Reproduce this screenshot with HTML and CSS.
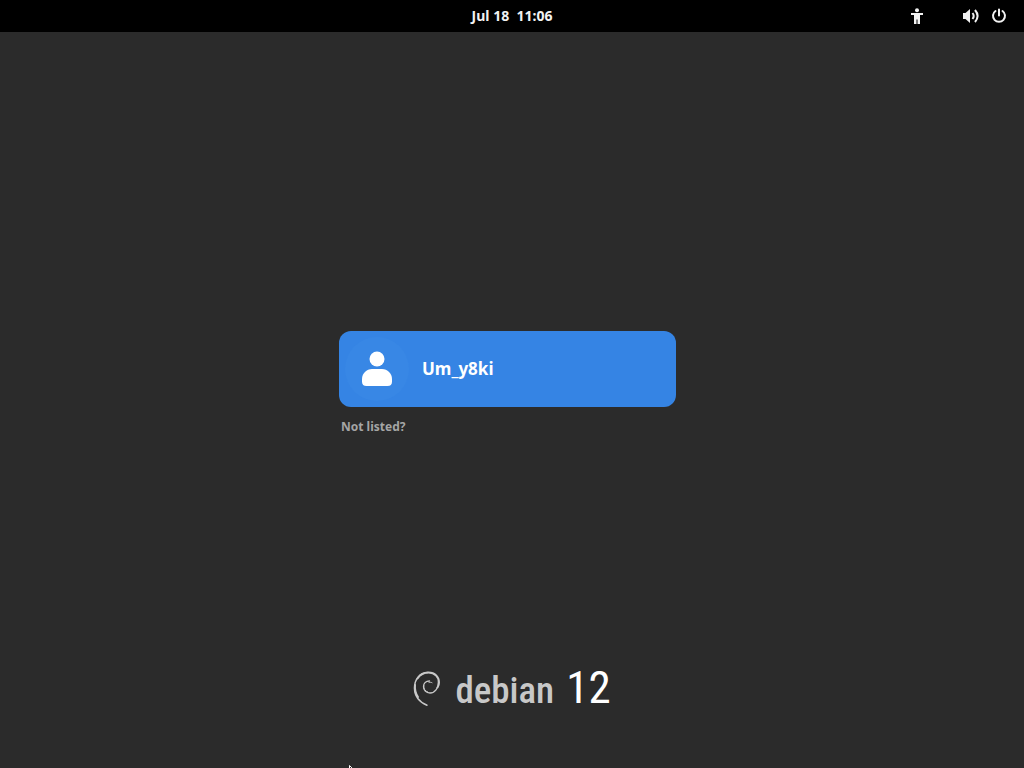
FILE: index.html
```
<!DOCTYPE html>
<html lang="en">
<head>
	<meta charset="UTF-8">
	<title>Login</title>
	<link rel="stylesheet" href="styles.css">
</head>
<body>
	<header class="panel">
		<button type="button" class="clock"><time>Jul 18&nbsp; 11:06</time></button>
		<div class="status">
			<button type="button" class="tray" aria-label="Accessibility">
				<svg width="16" height="16" viewBox="0 0 16 16" fill="currentColor">
					<circle cx="8" cy="2.200" r="2"/>
					<path d="M2 5h12v2h-3v9H8.500v-4.500h-1V16H5V7H2z"/>
				</svg>
			</button>
			<button type="button" class="tray" aria-label="System">
				<svg width="20" height="16" viewBox="0 0 20 16" fill="none" stroke="currentColor" stroke-width="2">
					<path d="M2 5h2.500L9 1v14L4.500 11H2z" fill="currentColor" stroke="none"/>
					<path d="M11.500 5q2.400 3 0 6"/>
					<path d="M14 2q5.200 6 0 12"/>
				</svg>
				<svg width="16" height="16" viewBox="0 0 16 16" fill="none" stroke="currentColor" stroke-width="2" stroke-linecap="round">
					<path d="M4.500 3a6 6 0 1 0 7 0M8 1.500v6"/>
				</svg>
			</button>
		</div>
	</header>

	<main class="login">
		<div class="users">
			<button type="button" class="user">
				<span class="avatar">
					<svg width="32" height="36" viewBox="0 0 32 36" fill="currentColor">
						<circle cx="16" cy="8" r="7.500"/>
						<path d="M11 18h10c5.500 0 10 4.500 10 10v2.500c0 3-1.500 4.500-4.500 4.500h-21C2.500 35 1 33.500 1 30.500V28c0-5.500 4.500-10 10-10z"/>
					</svg>
				</span>
				<span class="name">Um_y8ki</span>
			</button>
			<button type="button" class="other">Not listed?</button>
		</div>
	</main>

	<footer class="brand">
		<svg class="swirl" width="28" height="38" viewBox="0 0 28 38" fill="none" stroke="currentColor" stroke-linecap="round">
			<path d="M14 36.300C6.500 33 1.500 27 1.500 19 1.500 10 7 3.500 15 3.500" stroke-width="1.500"/>
			<path d="M4.500 9.500C7.500 5 11 3.500 15.500 3.500c6.500 0 10.500 4.500 10.500 10 0 2-.500 3.500-1.500 5" stroke-width="2"/>
			<path d="M25.500 12c.300 7-3.500 12-8.500 12-4 0-6.500-3-6.500-6.300 0-3.400 2.500-5.700 6-5.700" stroke-width="1.300"/>
			<path d="M10.700 16.500c-.5 3.500 1.800 5.800 4 6.500M16 13.500c1.200-.4 2-.3 3 .2" stroke-width="1"/>
			<path d="M2 16c-.400 4.500.400 8.500 3 12" stroke-width="2"/>
		</svg>
		<span class="distro">debian</span>
		<span class="release">12</span>
	</footer>

	<!-- mouse pointer, mostly below the screen edge -->
	<svg class="pointer" width="12" height="18" viewBox="0 0 12 18">
		<path d="M.5.500v15l3.500-3.500 2.500 5.500 2-1-2.500-5h5z" fill="#111" stroke="#fff"/>
	</svg>
</body>
</html>
```
FILE: styles.css
```
* {
	box-sizing: border-box;
	margin: 0;
	padding: 0;
}

body {
	display: flex;
	flex-direction: column;
	height: 100vh;
	overflow: hidden;
	position: relative;
	background: #2b2b2b;
	color: #fff;
	font-family: "Noto Sans", sans-serif;
	font-weight: bold;
}

button {
	border: 0;
	background: none;
	color: inherit;
	font: inherit;
	cursor: pointer;
}

svg {
	display: block;
}

.panel {
	display: grid;
	grid-template-columns: 1fr auto 1fr;
	align-items: center;
	height: 32px;
	background: #000;
	color: #f2f2f2;
}

.clock {
	grid-column: 2;
	font-size: 14px;
	line-height: 32px;
}

.status {
	display: flex;
	justify-content: flex-end;
	gap: 36px;
	padding-right: 17px;
}

.tray {
	display: flex;
	align-items: center;
	gap: 10px;
}

.login {
	flex: 1;
	display: flex;
	flex-direction: column;
	align-items: center;
	justify-content: center;
	padding-top: 74px;
}

.users {
	width: 100%;
	max-width: 346px;
	padding-right: 9px;
}

.user {
	display: flex;
	align-items: center;
	gap: 13px;
	width: 100%;
	padding: 6px;
	border-radius: 12px;
	background: #3584e4;
	text-align: left;
}

.avatar {
	display: flex;
	align-items: center;
	justify-content: center;
	width: 64px;
	height: 64px;
	border-radius: 50%;
	background: #3887e5;
}

.name {
	font-size: 17px;
	line-height: 24px;
}

.other {
	display: block;
	margin-top: 8px;
	padding: 0 2px;
	color: #a5a5a5;
	font-size: 12px;
	line-height: 24px;
}

.brand {
	display: flex;
	align-items: baseline;
	justify-content: center;
	height: 48px;
	margin-bottom: 56px;
	font-family: "Roboto Condensed", Roboto, sans-serif;
	font-weight: normal;
	line-height: 48px;
}

.swirl {
	align-self: center;
	margin-right: 14px;
	color: #c8c8c8;
}

.distro {
	margin-right: 12px;
	color: #c8c8c8;
	font-size: 37px;
	font-weight: 500;
}

.release {
	font-size: 45px;
}

.pointer {
	position: absolute;
	left: 349px;
	top: calc(100% - 3px);
}
```
